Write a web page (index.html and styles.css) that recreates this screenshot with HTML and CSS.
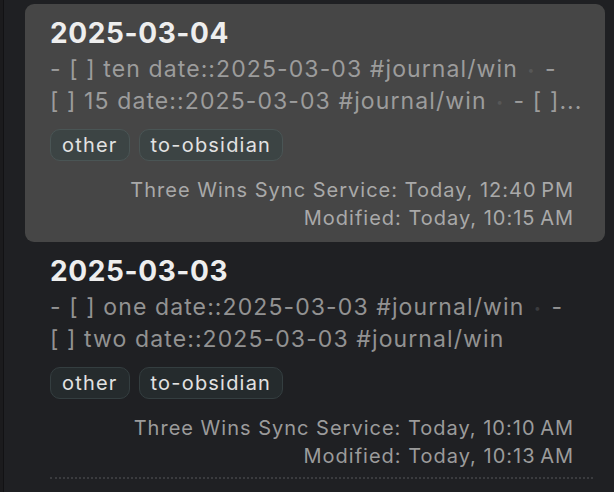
FILE: index.html
```html
<!DOCTYPE html>
<html>
<head>
<meta charset="utf-8">
<link rel="stylesheet" href="styles.css">
</head>
<body>
<div class="app">
  <div class="edge"></div>
  <div class="list">
    <div class="item active">
      <div class="title">2025-03-04</div>
      <div class="preview">
        <div class="line">- [ ] ten date::2025-03-03 #journal/win <span class="dot">•</span> -</div>
        <div class="line">[ ] 15 date::2025-03-03 #journal/win <span class="dot">•</span> - [ ]...</div>
      </div>
      <div class="tags">
        <span class="tag">other</span>
        <span class="tag">to-obsidian</span>
      </div>
      <div class="meta">
        <div>Three Wins Sync Service: Today, 12:40&#8239;PM</div>
        <div>Modified: Today, 10:15&#8239;AM</div>
      </div>
    </div>
    <div class="item">
      <div class="title">2025-03-03</div>
      <div class="preview">
        <div class="line">- [ ] one date::2025-03-03 #journal/win <span class="dot">•</span> -</div>
        <div class="line">[ ] two date::2025-03-03 #journal/win</div>
      </div>
      <div class="tags">
        <span class="tag">other</span>
        <span class="tag">to-obsidian</span>
      </div>
      <div class="meta">
        <div>Three Wins Sync Service: Today, 10:10&#8239;AM</div>
        <div>Modified: Today, 10:13&#8239;AM</div>
      </div>
      <div class="sep"></div>
    </div>
  </div>
</div>
</body>
</html>
```
FILE: styles.css
```css
* { box-sizing: border-box; }
html, body {
  margin: 0;
  padding: 0;
  background: #1f2023;
  height: 100%;
  overflow: hidden;
}
body {
  font-family: Inter, "Noto Sans", sans-serif;
  -webkit-font-smoothing: antialiased;
}
.app {
  display: flex;
  height: 492px;
}
.edge {
  width: 4px;
  flex: none;
  background: #1b1b1d;
  border-right: 1px solid #121214;
}
.list {
  flex: 1;
  min-width: 0;
  padding: 4px 9px 0 21px;
}
.item {
  padding: 12px 31px 0 25px;
  height: 238px;
  border-radius: 9px;
}
.item.active {
  background: #464646;
}
.title {
  font-size: 28px;
  font-weight: 700;
  line-height: 34px;
  color: #eeeeee;
  letter-spacing: 0.6px;
}
.preview {
  margin-top: 4px;
  font-size: 23px;
  line-height: 31.5px;
  letter-spacing: 1.1px;
  color: #9c9c9c;
}
.item:not(.active) .preview { color: #929292; }
.line { white-space: nowrap; }
.dot {
  font-size: 12px;
  color: #575757;
  vertical-align: 3px;
  padding: 0 2px;
}
.item:not(.active) .dot { color: #3a3b3e; }
.tags {
  display: flex;
  gap: 9px;
  margin-top: 12px;
}
.tag {
  height: 32px;
  padding: 0 11px;
  border-radius: 10px;
  font-size: 20px;
  line-height: 30px;
  letter-spacing: 1.2px;
  color: #e2e2e2;
  background: #3c4444;
  border: 1px solid #4a5555;
}
.item:not(.active) .tag {
  background: #252b2d;
  border-color: #343e40;
}
.meta {
  margin-top: 15px;
  text-align: right;
  font-size: 20px;
  line-height: 28px;
  letter-spacing: 1px;
  color: #a9a9a9;
}
.item:not(.active) .meta { color: #9b9b9b; }
.sep {
  margin-top: 7px;
  margin-right: -19px;
  border-top: 2px dotted #3a3b3e;
}
```
